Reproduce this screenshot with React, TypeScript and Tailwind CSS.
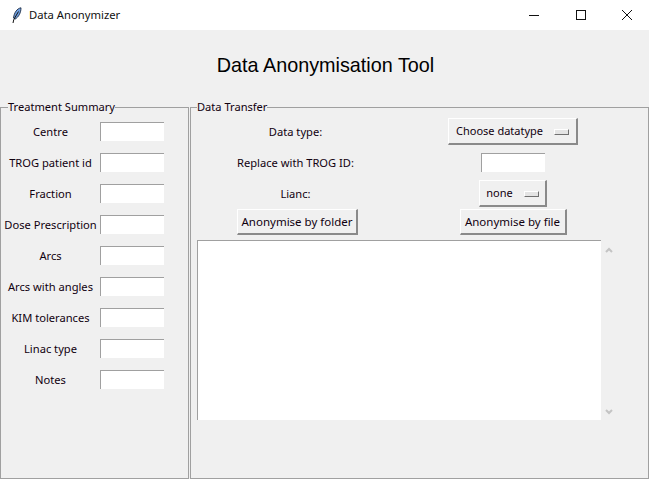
const summaryFields = [
  "Centre",
  "TROG patient id",
  "Fraction",
  "Dose Prescription",
  "Arcs",
  "Arcs with angles",
  "KIM tolerances",
  "Linac type",
  "Notes",
];

function Entry() {
  return (
    <div className="h-[19px] w-16 border-t border-l border-[#a0a0a0] bg-white" />
  );
}

function TkButton({ label, className }: { label: string; className: string }) {
  return (
    <button
      className={`flex items-center justify-center border-t border-l border-white border-r-2 border-b-2 border-r-[#8a8a8a] border-b-[#8a8a8a] bg-[#f0f0f0] text-[11.5px] ${className}`}
    >
      {label}
    </button>
  );
}

function OptionMenu({ label, className }: { label: string; className: string }) {
  return (
    <button
      className={`flex items-center justify-center gap-[11px] border-t border-l border-white border-r-2 border-b-2 border-r-[#8a8a8a] border-b-[#8a8a8a] bg-[#f0f0f0] text-[11px] ${className}`}
    >
      <span>{label}</span>
      <span className="mt-px h-[6px] w-[15px] border-t border-l border-white border-r border-b border-r-[#707070] border-b-[#707070] bg-[#e4e4e4]" />
    </button>
  );
}

function Feather() {
  return (
    <svg width="10" height="17" viewBox="0 0 10 17" fill="none">
      <path d="M9 .8C5 1.5 2.2 5.5 1.5 11L3 12.2C6.8 10 9 5.5 9 .8Z" fill="#6f9fe0" stroke="#1c2b44" strokeWidth=".9" />
      <path d="M6.5 4.5L1.8 12.5L1 16" stroke="#111" strokeWidth="1" />
    </svg>
  );
}

export default function App() {
  return (
    <div className="flex h-[479px] w-[649px] flex-col overflow-hidden bg-[#f0f0f0] font-['Noto_Sans','Open_Sans',sans-serif] text-[11.15px] leading-4 text-[#10000f]">
      <div className="flex h-[30px] items-center bg-white">
        <div className="ml-3 w-[17px]">
          <Feather />
        </div>
        <span className="text-[11.25px] text-[#111]">Data Anonymizer</span>
        <div className="ml-auto flex items-center">
          <svg width="12" height="12" viewBox="0 0 12 12" className="mr-[35px]">
            <path d="M1 6.5H11" stroke="#111" strokeWidth="1" />
          </svg>
          <svg width="12" height="12" viewBox="0 0 12 12" className="mr-[34px]">
            <rect x="1.5" y="1.5" width="9" height="9" fill="none" stroke="#111" strokeWidth="1" />
          </svg>
          <svg width="12" height="12" viewBox="0 0 12 12" className="mr-4">
            <path d="M1 1L11 11M11 1L1 11" stroke="#111" strokeWidth="1" />
          </svg>
        </div>
      </div>

      <h1 className="mt-[23px] pl-[2px] text-center font-['Liberation_Sans',sans-serif] text-[19.8px] leading-6 text-black">
        Data Anonymisation Tool
      </h1>

      <div className="mt-[22px] flex min-h-0 flex-1 gap-px">
        <fieldset className="h-[380px] w-[189px] border border-[#a0a0a0] pt-[7px]">
          <legend className="ml-[7px] text-[11.1px] leading-4">Treatment Summary</legend>
          <div className="flex flex-col gap-3">
            {summaryFields.map((field) => (
              <div key={field} className="flex items-center">
                <span className="w-[99px] text-center whitespace-nowrap">{field}</span>
                <Entry />
              </div>
            ))}
          </div>
        </fieldset>

        <fieldset className="h-[380px] flex-1 border border-[#a0a0a0] pl-[6px] pt-[3px]">
          <legend className="text-[11.1px] leading-4">Data Transfer</legend>
          <div className="grid grid-cols-[197px_207px] justify-start">
            <div className="flex h-[27px] items-center justify-center">Data type:</div>
            <div className="flex h-[27px] justify-center pl-[31px]">
              <OptionMenu label="Choose datatype" className="h-[27px] w-[130px] shrink-0" />
            </div>
            <div className="mt-2 flex h-[19px] items-center justify-center">Replace with TROG ID:</div>
            <div className="mt-2 flex h-[19px] justify-center pl-[31px]">
              <Entry />
            </div>
            <div className="mt-2 flex h-[27px] items-center justify-center">Lianc:</div>
            <div className="mt-2 flex h-[27px] justify-center pl-[31px]">
              <OptionMenu label="none" className="h-[27px] w-[68px] shrink-0" />
            </div>
            <div className="mt-[2px] flex justify-center pl-[4px]">
              <TkButton label="Anonymise by folder" className="h-[26px] w-[121px]" />
            </div>
            <div className="mt-[2px] flex justify-center pl-[31px]">
              <TkButton label="Anonymise by file" className="h-[26px] w-[107px] shrink-0" />
            </div>
          </div>
          <div className="mt-[5px] flex">
            <div className="h-[180px] w-[404px] border-t border-l border-[#a0a0a0] bg-white" />
            <div className="flex w-4 flex-col items-center justify-between pt-[7px] pb-[5px]">
              <svg width="8" height="6" viewBox="0 0 8 6">
                <path d="M1 5L4 2L7 5" fill="none" stroke="#c4c4c4" strokeWidth="2" />
              </svg>
              <svg width="8" height="6" viewBox="0 0 8 6">
                <path d="M1 1L4 4L7 1" fill="none" stroke="#c4c4c4" strokeWidth="2" />
              </svg>
            </div>
          </div>
        </fieldset>
      </div>
    </div>
  );
}
